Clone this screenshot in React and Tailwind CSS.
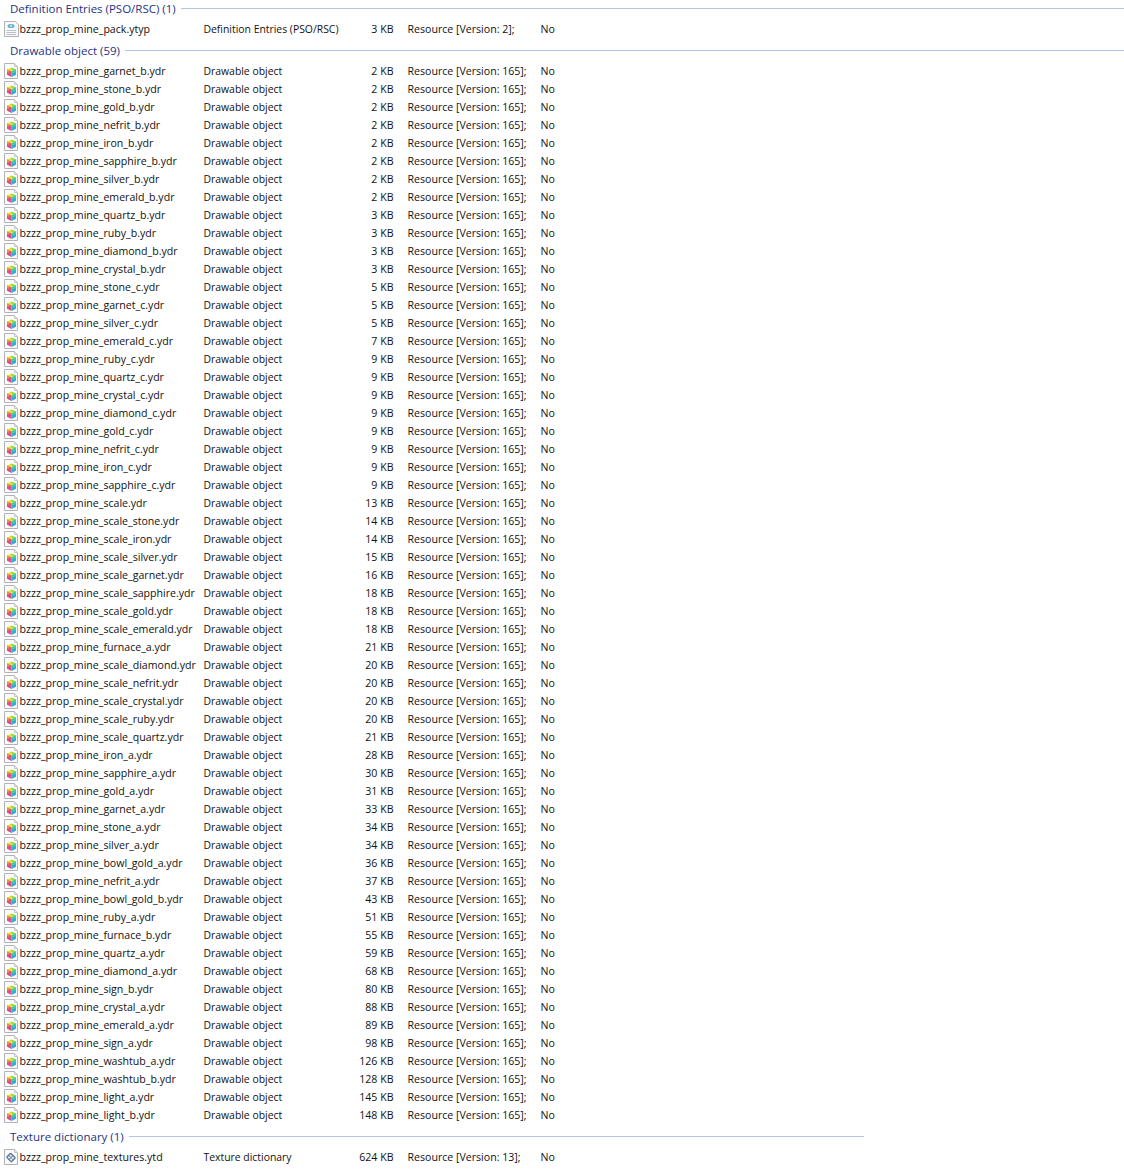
const drawable = `garnet_b:2 stone_b:2 gold_b:2 nefrit_b:2 iron_b:2 sapphire_b:2 silver_b:2 emerald_b:2 quartz_b:3 ruby_b:3 diamond_b:3 crystal_b:3 stone_c:5 garnet_c:5 silver_c:5 emerald_c:7 ruby_c:9 quartz_c:9 crystal_c:9 diamond_c:9 gold_c:9 nefrit_c:9 iron_c:9 sapphire_c:9 scale:13 scale_stone:14 scale_iron:14 scale_silver:15 scale_garnet:16 scale_sapphire:18 scale_gold:18 scale_emerald:18 furnace_a:21 scale_diamond:20 scale_nefrit:20 scale_crystal:20 scale_ruby:20 scale_quartz:21 iron_a:28 sapphire_a:30 gold_a:31 garnet_a:33 stone_a:34 silver_a:34 bowl_gold_a:36 nefrit_a:37 bowl_gold_b:43 ruby_a:51 furnace_b:55 quartz_a:59 diamond_a:68 sign_b:80 crystal_a:88 emerald_a:89 sign_a:98 washtub_a:126 washtub_b:128 light_a:145 light_b:148`
  .split(" ")
  .map((s) => s.split(":"));

function Sheet({ children }) {
  return (
    <svg width="15" height="16" viewBox="0 0 15 16" className="mt-[-2px] shrink-0">
      <path d="M.5 .5H10.5L13.5 3.5V15.5H.5Z" fill="#fbfbfb" stroke="#b0b3b7" />
      <path d="M10.5 .5V3.5H13.5" fill="#e8e8e8" stroke="#c4c6c9" />
      {children}
    </svg>
  );
}

const CubeIcon = () => (
  <Sheet>
    <path d="M3 6.5L7.5 4.5L12 6.5L7.5 8.5Z" fill="#e9e23a" />
    <path d="M7.5 4.5L12 6.5L9.8 7.5L7.5 6.5Z" fill="#8ed84a" />
    <path d="M3 6.5L7.5 8.5V14L3 11.8Z" fill="#e04a86" />
    <path d="M3 6.5L5.2 7.5V10L3 9Z" fill="#f0913a" />
    <path d="M7.5 8.5L12 6.5V11.8L7.5 14Z" fill="#33a8e0" />
    <path d="M7.5 8.5L12 6.5V9L7.5 11Z" fill="#39cfa8" />
  </Sheet>
);

const DefIcon = () => (
  <svg width="15" height="16" viewBox="0 0 15 16" className="mt-[-2px] shrink-0">
    <path d="M.5 .5H11.5L14.5 3.5V15.5H.5Z" fill="#f8f9fa" stroke="#b0b3b7" />
    <ellipse cx="7" cy="5" rx="3.5" ry="2" fill="#5db2cf" />
    <circle cx="7" cy="5" r="1" fill="#e6f5fa" />
    <path d="M2.5 9.5H12M2.5 11.5H12M2.5 13.5H12" stroke="#bcc0c6" />
  </svg>
);

const TexIcon = () => (
  <Sheet>
    <g transform="rotate(45 7 8.5)">
      <rect x="3.5" y="5.5" width="7" height="6" rx="1" fill="#7f9ab5" stroke="#5a7590" />
      <circle cx="5.5" cy="7.3" r="1" fill="#e8eef4" />
      <circle cx="8.5" cy="7.3" r="1" fill="#e8eef4" />
      <circle cx="5.5" cy="9.8" r="1" fill="#e8eef4" />
      <circle cx="8.5" cy="9.8" r="1" fill="#e8eef4" />
    </g>
  </Sheet>
);

function Row({ icon, name, type, size, attrs }) {
  return (
    <div className="flex h-[18px] items-center whitespace-nowrap pt-[2px] text-[10.6px] text-[#111111]">
      <div className="ml-[4px] flex w-[199.5px] items-center">
        {icon}
        <span className="ml-[0.5px]">{name}</span>
      </div>
      <div className="w-[130px] text-[10.4px]">{type}</div>
      <div className="w-[60px] text-right">{size}</div>
      <div className="ml-[14px] w-[133px]">{attrs}</div>
      <div>No</div>
    </div>
  );
}

function Header({ title, lineWidth, className }) {
  return (
    <div className={`flex h-[18px] items-center whitespace-nowrap text-[11.5px] text-[#1e3287] ${lineWidth} ${className}`}>
      <span className="ml-[10px] pt-[1px]">{title}</span>
      <div className="ml-[5px] h-px flex-1 bg-[#b3c5e8]" />
    </div>
  );
}

export default function App() {
  return (
    <div className="h-[1172px] w-[1124px] overflow-hidden bg-white font-['Open_Sans','Noto_Sans',sans-serif]">
      <Header title="Definition Entries (PSO/RSC) (1)" lineWidth="w-[1124px]" className="mt-[-1px]" />
      <div className="mt-[3px]">
        <Row icon={<DefIcon />} name="bzzz_prop_mine_pack.ytyp" type="Definition Entries (PSO/RSC)" size="3 KB" attrs="Resource [Version: 2];" />
      </div>
      <Header title="Drawable object (59)" lineWidth="w-[1124px]" className="mt-[3px]" />
      <div className="mt-[3px]">
        {drawable.map(([n, s]) => (
          <Row key={n} icon={<CubeIcon />} name={`bzzz_prop_mine_${n}.ydr`} type="Drawable object" size={`${s} KB`} attrs="Resource [Version: 165];" />
        ))}
      </div>
      <Header title="Texture dictionary (1)" lineWidth="w-[864px]" className="mt-[3px]" />
      <div className="mt-[3px]">
        <Row icon={<TexIcon />} name="bzzz_prop_mine_textures.ytd" type="Texture dictionary" size="624 KB" attrs="Resource [Version: 13];" />
      </div>
    </div>
  );
}
